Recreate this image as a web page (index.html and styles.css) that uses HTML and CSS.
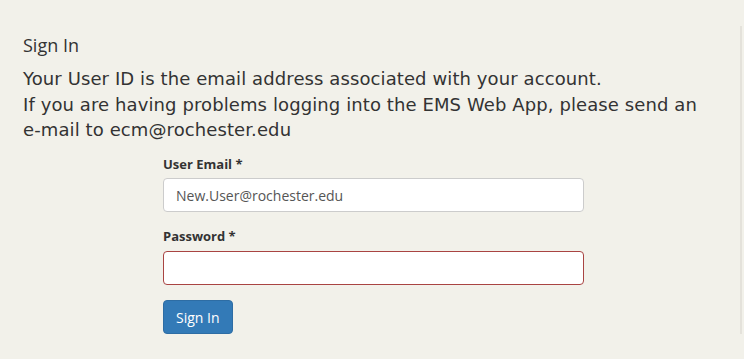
FILE: index.html
```html
<!DOCTYPE html>
<html>
<head>
	<meta charset="utf-8">
	<title>EMS Web App - Sign In</title>
	<link rel="stylesheet" href="styles.css">
</head>
<body>
<div class="panel">
	<h2 class="title">Sign In</h2>

	<div class="notice">
		Your User ID is the email address associated with your account.<br>
		If you are having problems logging into the EMS Web App, please send an <span class="nobr">e-mail</span> to ecm@rochester.edu
	</div>

	<form class="signin" onsubmit="return false">
		<div class="group">
			<label for="userEmail">User Email *</label>
			<input id="userEmail" class="field" type="text" value="New.User@rochester.edu">
		</div>

		<div class="group">
			<label for="userPassword">Password *</label>
			<input id="userPassword" class="field invalid" type="password">
		</div>

		<button type="submit" class="btn">Sign In</button>
	</form>
</div>
</body>
</html>
```

FILE: styles.css
```css
body {
	background:#f2f1ea;
	color:#333;
	margin:0;
	font:14px/1.42857 "Open Sans", sans-serif;
	}
.panel {
	margin:26px 2px 0 0;
	padding:0 0 0 23px;
	border-right:2px solid #e4e2db;
	}
.title {
	font:18px/1.1 "Open Sans", sans-serif;
	color:#333;
	margin:0;
	padding:10px 0 10px 0;
	}
.notice {
	font:18px/1.42857 "DejaVu Sans", Verdana, sans-serif;
	letter-spacing:0.1px;
	color:#333;
	margin:0 0 12px 0;
	}
.nobr {
	white-space:nowrap;
	}
.signin {
	width:421px;
	margin:0 0 0 140px;
	}
.group {
	margin:0 0 15px 0;
	}
label {
	display:block;
	font-weight:bold;
	font-size:13px;
	margin:0 0 5px 0;
	}
.field {
	display:block;
	box-sizing:border-box;
	width:100%;
	height:34px;
	padding:6px 12px;
	font:14px "Open Sans", sans-serif;
	color:#555;
	background:#fff;
	border:1px solid #ccc;
	border-radius:4px;
	outline:none;
	}
.field.invalid {
	border-color:#a94442;
	}
.btn {
	display:block;
	height:34px;
	padding:6px 12px;
	font:14px "Open Sans", sans-serif;
	color:#fff;
	background:#337ab7;
	border:1px solid #2e6da4;
	border-radius:4px;
	}
```
